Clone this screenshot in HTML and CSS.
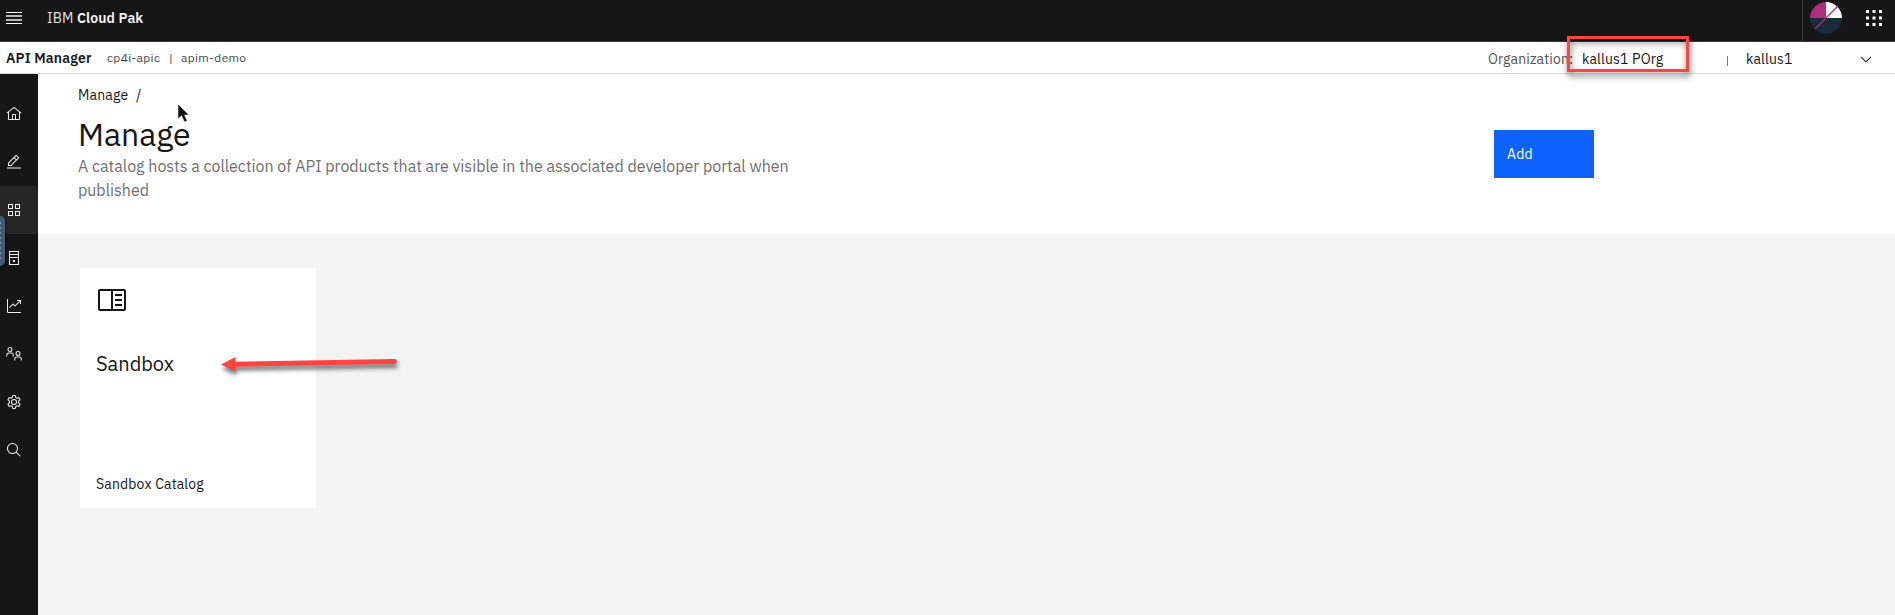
FILE: index.html
```html
<!DOCTYPE html>
<html lang="en">
<head>
<meta charset="utf-8">
<title>API Manager</title>
<link rel="stylesheet" href="styles.css">
</head>
<body>
<header class="topbar">
  <svg class="menu" width="16" height="13" shape-rendering="crispEdges"><path fill="#fff" d="M0 0h16v1H0zM0 11h16v1H0z"/><path fill="#b8b8b8" d="M0 3h16v2H0zM0 7h16v2H0z"/></svg>
  <div class="brand"><span class="ibm">IBM</span><b class="pak">Cloud Pak</b></div>
  <div class="account">
    <svg width="32" height="32" viewBox="0 0 32 32"><path d="M16 16H0A16 16 0 0 1 16 0z" fill="#b12c7b"/><path d="M16 16V0a16 16 0 0 1 16 16z" fill="#fff"/><path d="M0 16h32a16 16 0 0 1-32 0z" fill="#172b38"/><path d="M5 27 27.500 4.500" stroke="#b12c7b" stroke-width="1.200"/></svg>
  </div>
  <svg class="switcher" width="16" height="16" fill="#fff"><path d="M0 0h3v3H0zM6.500 0h3v3h-3zM13 0h3v3h-3zM0 6.500h3v3H0zM6.500 6.500h3v3h-3zM13 6.500h3v3h-3zM0 13h3v3H0zM6.500 13h3v3h-3zM13 13h3v3h-3z"/></svg>
</header>
<div class="subbar">
  <b class="product">API Manager</b>
  <span class="instance">cp4i-apic</span><span class="bar">|</span><span class="demo">apim-demo</span>
  <div class="org">
    <span class="org-label">Organization:</span>
    <span class="org-name">kallus1 POrg</span>
    <span class="divider"></span>
    <span class="user">kallus1</span>
    <svg class="chevron" width="12" height="7" fill="none" stroke="#333" stroke-width="1.200"><path d="M1 .8 6 5.800 11 .8"/></svg>
  </div>
</div>
<div class="shell">
  <nav class="side">
    <a class="item"><svg viewBox="0 0 32 32"><path d="M16.600 2.200a1 1 0 0 0-1.200 0L1 13.400 2.200 15 4 13.600V26a2 2 0 0 0 2 2h20a2 2 0 0 0 2-2V13.600L29.800 15 31 13.400zM18 26h-4v-8h4zm2 0v-8a2 2 0 0 0-2-2h-4a2 2 0 0 0-2 2v8H6V12l10-7.800L26 12v14z"/></svg></a>
    <a class="item"><svg viewBox="0 0 32 32"><path d="M2 27h28v2H2zM25.400 9a2 2 0 0 0 0-2.800l-3.600-3.600a2 2 0 0 0-2.800 0l-15 15V24h6.400zm-5-5L24 7.600l-3 3L17.400 7zM6 22v-3.600l10-10 3.600 3.600-10 10z"/></svg></a>
    <a class="item active"><svg viewBox="0 0 16 16" shape-rendering="crispEdges"><path fill-rule="evenodd" d="M2 2h5v5H2zM3 3v3h3V3zM9 2h5v5H9zM10 3v3h3V3zM2 9h5v5H2zM3 10v3h3v-3zM9 9h5v5H9zM10 10v3h3v-3z"/></svg></a>
    <a class="item"><svg viewBox="0 0 16 16" shape-rendering="crispEdges"><path fill-rule="evenodd" d="M3 1h10v14H3zM4 2v2h8V2zM4 5v2h8V5zM4 8v6h8V8zM7 10h2v2H7z"/></svg></a>
    <a class="item"><svg viewBox="0 0 32 32"><path d="M4 2H2v26a2 2 0 0 0 2 2h26v-2H4z"/><path d="M30 9V4h-8v2h4.600L18 14.600l-3.300-3.300a1 1 0 0 0-1.400 0L6 18.600 7.400 20l6.600-6.600 3.300 3.300a1 1 0 0 0 1.400 0L28 7.400V12h2z"/></svg></a>
    <a class="item"><svg class="line" viewBox="0 0 32 32"><circle cx="8" cy="7" r="4"/><path d="M1.500 21v-3a4 4 0 0 1 4-4h5a4 4 0 0 1 4 4v3"/><circle cx="24" cy="15" r="4"/><path d="M17.500 29v-3a4 4 0 0 1 4-4h5a4 4 0 0 1 4 4v3"/></svg></a>
    <a class="item"><svg class="line" viewBox="0 0 32 32"><path d="M13.500 3h5l.9 4 2.400 1.400 3.900-1.300 2.500 4.300-3 2.800v3.600l3 2.800-2.500 4.300-3.900-1.300-2.400 1.400-.9 4h-5l-.9-4-2.400-1.400-3.900 1.300-2.500-4.300 3-2.800v-3.600l-3-2.800 2.500-4.300 3.900 1.300L12.600 7z"/><circle cx="16" cy="16" r="5"/></svg></a>
    <a class="item"><svg viewBox="0 0 32 32"><path d="m29 27.600-7.600-7.500A11 11 0 1 0 20 21.500l7.600 7.500zM4 13a9 9 0 1 1 18 0 9 9 0 0 1-18 0z"/></svg></a>
    <i class="handle"></i>
  </nav>
  <main class="main">
    <section class="intro">
      <div class="copy">
        <div class="crumbs"><span>Manage</span><span class="slash">/</span></div>
        <h1 class="title">Manage</h1>
        <p class="desc">A catalog hosts a collection of API products that are visible in the associated developer portal when<br>published</p>
      </div>
      <button class="add">Add</button>
    </section>
    <section class="cards">
      <article class="card">
        <svg width="28" height="22" fill="none" stroke="#161616" stroke-width="2"><rect x="1" y="1" width="26" height="20" rx="1"/><path d="M14 1v20M17 6h7M17 11h7M17 16h7"/></svg>
        <h2 class="name">Sandbox</h2>
        <p class="kind">Sandbox Catalog</p>
      </article>
    </section>
  </main>
</div>
<div class="highlight"></div>
<svg class="arrow" width="190" height="30"><path d="M19 14.200 179.500 11.500" stroke="#ff4444" stroke-width="5" stroke-linecap="round"/><path d="M6 14.500 20.500 7v14.500z" fill="#ff4444"/></svg>
<svg class="pointer" width="14" height="20"><path d="M0 0v15l3.500-3.200L6.500 18l2.700-1.200L6.500 11H11z" fill="#111" stroke="#fff" stroke-width=".5"/></svg>
</body>
</html>
```
FILE: styles.css
```css
* { box-sizing: border-box; }
body { margin: 0; width: 1895px; height: 615px; overflow: hidden; background: #f3f3f3; color: #161616; font: 14px/20px "IBM Plex Sans", Roboto, sans-serif; white-space: nowrap; }
h1, h2, p { margin: 0; font-weight: 400; }
svg { display: block; flex: none; }

.topbar { display: flex; height: 42px; background: #161616; border-bottom: 1px solid #393939; color: #f4f4f4; }
.menu { margin: 12px 0 0 6px; }
.brand { display: flex; margin: 8px 0 0 25px; }
.ibm { width: 30px; color: #e4e4e4; letter-spacing: .1px; }
.pak { font-weight: 600; letter-spacing: .1px; }
.account { width: 64px; margin-left: auto; padding: 2px 0 0 7px; border-left: 1px solid #393939; }
.switcher { margin: 10px 13px 0 0; }

.subbar { display: flex; height: 32px; padding: 6px 0 0 6px; background: #fff; border-bottom: 1px solid #dcdcdc; }
.product { width: 101px; font-weight: 600; letter-spacing: .16px; }
.instance, .demo, .bar { font-size: 12px; color: #444; letter-spacing: .32px; }
.instance { width: 62px; }
.bar { width: 12px; }
.org { display: flex; width: 407px; margin: 1px 0 0 auto; }
.org-label { width: 94px; color: #525252; letter-spacing: .16px; }
.org-name { width: 145px; letter-spacing: .16px; }
.divider { width: 1px; height: 10px; margin: 7px 18px 0 0; background: #777; }
.user { width: 114px; letter-spacing: .15px; }
.chevron { margin-top: 7px; }

.shell { display: flex; height: 541px; }
.side { position: relative; width: 38px; padding-top: 16px; background: #161616; }
.item { display: flex; align-items: center; height: 48px; padding-left: 6px; }
.item svg { width: 16px; height: 16px; fill: #eee; }
.item .line { fill: none; stroke: #eee; stroke-width: 2.1; stroke-linejoin: round; }
.active { background: #262626; }
.handle { position: absolute; left: 0; top: 142px; width: 5px; height: 50px; border-radius: 0 5px 5px 0; background: #475a73; box-shadow: 1px 2px 2px #0008; }
.handle::before { content: ""; position: absolute; left: 0; top: 6px; width: 1px; height: 38px; background: repeating-linear-gradient(#8492a3 0 2px, transparent 2px 5px); }

.main { flex: 1; }
.intro { display: flex; height: 160px; padding-left: 40px; background: #fff; }
.copy { width: 1416px; padding-top: 11px; }
.crumbs { display: flex; letter-spacing: .16px; }
.crumbs span { width: 58px; }
.crumbs .slash { width: auto; }
.title { margin-top: 9px; font-size: 32px; line-height: 40px; }
.desc { color: #6f6f6f; font-size: 16px; line-height: 24px; }
.add { width: 100px; height: 48px; margin-top: 56px; padding: 0 13px; border: 0; background: #0f62fe; color: #fff; font: inherit; text-align: left; letter-spacing: .16px; }

.cards { padding: 34px 42px; }
.card { width: 236px; height: 240px; padding: 21px 16px; background: #fff; }
.card svg { margin-left: 2px; }
.name { margin-top: 39px; font-size: 20px; line-height: 28px; }
.kind { margin-top: 96px; letter-spacing: .16px; }

.highlight { position: absolute; left: 1567px; top: 36px; width: 122px; height: 36px; border: 3px solid #ff4444; filter: drop-shadow(1px 4px 3px #0009); }
.arrow { position: absolute; left: 215px; top: 350px; overflow: visible; filter: drop-shadow(1px 4px 2px #0008); }
.pointer { position: absolute; left: 178px; top: 104px; overflow: visible; }
```
